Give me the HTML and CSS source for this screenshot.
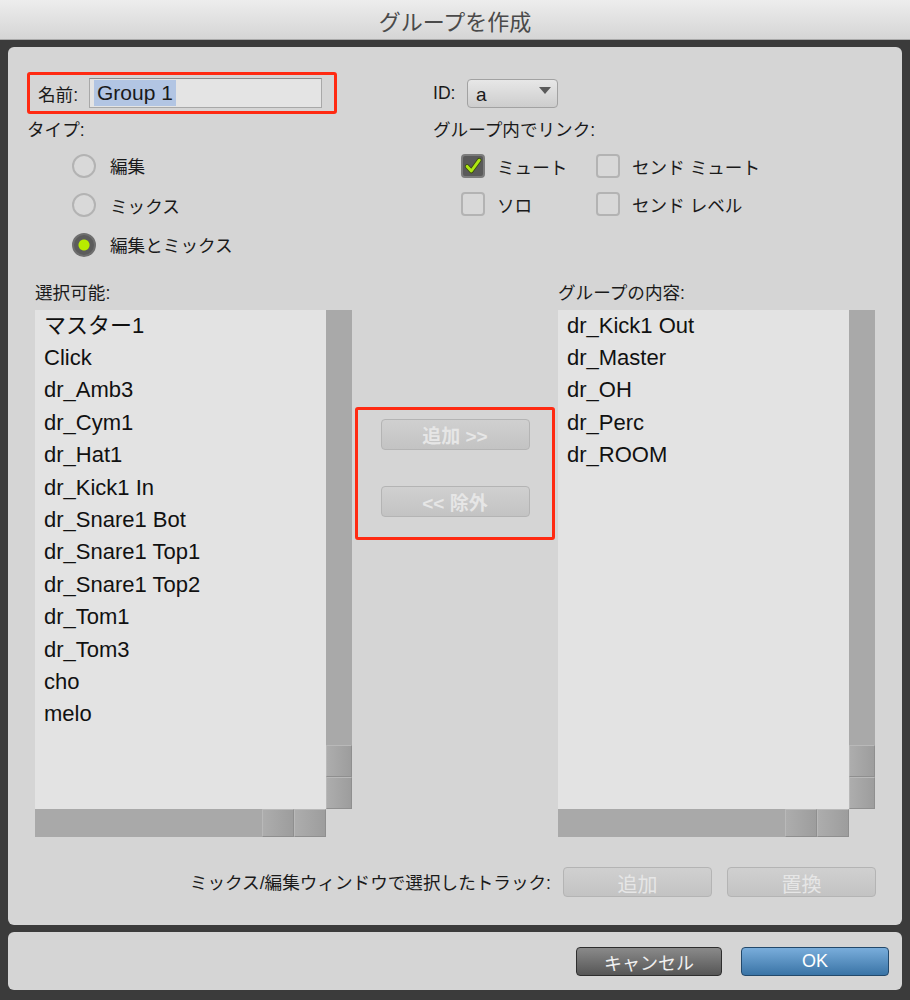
FILE: index.html
```html
<!DOCTYPE html>
<html lang="ja">
<head>
  <meta charset="UTF-8" />
  <title>グループを作成</title>
  <link rel="stylesheet" href="styles.css">
</head>
<body>

  <!-- TITLE BAR -->
  <div class="titlebar">グループを作成</div>

  <div class="dialog">

    <!-- MAIN PANEL -->
    <div class="panel main">
      <div class="top">
        <div class="col-left">
          <div class="name-box">
            <label>名前:</label>
            <div class="text-field"><span class="sel">Group 1</span></div>
          </div>
          <div class="caption">タイプ:</div>
          <div class="radios">
            <div class="radio-row"><span class="radio"></span>編集</div>
            <div class="radio-row"><span class="radio"></span>ミックス</div>
            <div class="radio-row"><span class="radio on"></span>編集とミックス</div>
          </div>
        </div>
        <div class="col-right">
          <div class="id-row">
            <label>ID:</label>
            <div class="popup">a<span class="arrow"></span></div>
          </div>
          <div class="caption">グループ内でリンク:</div>
          <div class="checks">
            <div class="check-row">
              <span class="check on">
                <svg viewBox="0 0 24 24" width="22" height="22"><path d="M5 12.5 L10 18 L19.5 5" fill="none" stroke="#3b4a10" stroke-width="5.5" stroke-linecap="round" stroke-linejoin="round"/><path d="M5 12.5 L10 18 L19.5 5" fill="none" stroke="#aee813" stroke-width="3.5" stroke-linecap="round" stroke-linejoin="round"/></svg>
              </span>ミュート
            </div>
            <div class="check-row"><span class="check"></span>センド ミュート</div>
            <div class="check-row"><span class="check"></span>ソロ</div>
            <div class="check-row"><span class="check"></span>センド レベル</div>
          </div>
        </div>
      </div>

      <!-- TRACK LISTS -->
      <div class="lists">
        <div class="caption">選択可能:</div>
        <div></div>
        <div class="caption">グループの内容:</div>

        <div class="listbox">
          <ul class="items">
            <li>マスター1</li>
            <li>Click</li>
            <li>dr_Amb3</li>
            <li>dr_Cym1</li>
            <li>dr_Hat1</li>
            <li>dr_Kick1 In</li>
            <li>dr_Snare1 Bot</li>
            <li>dr_Snare1 Top1</li>
            <li>dr_Snare1 Top2</li>
            <li>dr_Tom1</li>
            <li>dr_Tom3</li>
            <li>cho</li>
            <li>melo</li>
          </ul>
          <div class="vscroll"><div class="track"></div><div class="sbtn"></div><div class="sbtn"></div></div>
          <div class="hscroll"><div class="track"></div><div class="sbtn"></div><div class="sbtn"></div></div>
        </div>

        <div class="mid">
          <div class="move-box">
            <button class="btn off">追加 &gt;&gt;</button>
            <button class="btn off">&lt;&lt; 除外</button>
          </div>
        </div>

        <div class="listbox">
          <ul class="items">
            <li>dr_Kick1 Out</li>
            <li>dr_Master</li>
            <li>dr_OH</li>
            <li>dr_Perc</li>
            <li>dr_ROOM</li>
          </ul>
          <div class="vscroll"><div class="track"></div><div class="sbtn"></div><div class="sbtn"></div></div>
          <div class="hscroll"><div class="track"></div><div class="sbtn"></div><div class="sbtn"></div></div>
        </div>
      </div>

      <div class="track-row">
        <span>ミックス/編集ウィンドウで選択したトラック:</span>
        <button class="btn off wide">追加</button>
        <button class="btn off wide">置換</button>
      </div>
    </div>

    <!-- FOOTER -->
    <div class="panel footer">
      <button class="btn cancel">キャンセル</button>
      <button class="btn ok">OK</button>
    </div>

  </div>

</body>
</html>
```

FILE: styles.css
```css
body {
  margin: 0;
  background: #3b3b3b;
  font-family: "Liberation Sans", "Noto Sans CJK JP", sans-serif;
  color: #1a1a1a;
  font-size: 17.6px;
}
.titlebar {
  height: 40px;
  line-height: 40px;
  text-align: center;
  font-family: "Noto Sans CJK JP", sans-serif;
  font-size: 22px;
  color: #4a4a4a;
  background: linear-gradient(#ededed, #d5d5d5);
  border-bottom: 1px solid #a9a9a9;
  box-sizing: border-box;
}
.dialog {
  padding: 7px 8px 0;
}
.panel {
  background: #d5d5d5;
  border-radius: 6px;
  box-sizing: border-box;
}
.main {
  height: 878px;
  padding: 25px 26px 0 19px;
}
.caption {
  line-height: 20px;
}

/* top area */
.top {
  display: flex;
}
.col-left {
  width: 406px;
}
.name-box {
  width: 310px;
  height: 42px;
  box-sizing: border-box;
  border: 3px solid #ff2a12;
  border-radius: 3px;
  display: flex;
  align-items: center;
  padding-left: 8px;
}
.name-box label {
  width: 51px;
}
.text-field {
  width: 233px;
  height: 30px;
  box-sizing: border-box;
  background: #e4e4e4;
  border: 1px solid #a8a8a8;
  border-top-color: #8c8c8c;
  display: flex;
  align-items: center;
  padding-left: 4px;
  font-size: 21px;
}
.sel {
  background: #b2c5e3;
  padding: 0 3px;
  line-height: 26px;
}
.top .caption {
  margin-top: 6px;
}
.radios {
  margin-left: 45px;
  padding-top: 6px;
}
.radio-row {
  height: 39.5px;
  display: flex;
  align-items: center;
}
.radio {
  width: 24px;
  height: 24px;
  box-sizing: border-box;
  border-radius: 50%;
  border: 2px solid #b3b3b3;
  background: #d9d9d9;
  margin-right: 14px;
}
.radio.on {
  border: 2px solid #6f6f6f;
  background: radial-gradient(circle, #b8ec00 0 5px, #5c5c5c 6px);
}
.id-row {
  height: 42px;
  display: flex;
  align-items: center;
}
.id-row label {
  width: 34px;
}
.popup {
  position: relative;
  width: 91px;
  height: 29px;
  box-sizing: border-box;
  border: 1px solid #a2a2a2;
  border-radius: 4px;
  background: linear-gradient(#e7e7e7, #cdcdcd);
  padding-left: 8px;
  line-height: 30px;
  font-size: 19px;
}
.arrow {
  position: absolute;
  right: 6px;
  top: 7px;
  border-left: 6px solid transparent;
  border-right: 6px solid transparent;
  border-top: 7px solid #5a5a5a;
}
.checks {
  margin-left: 28px;
  padding-top: 7px;
  display: grid;
  grid-template-columns: 135px auto;
}
.check-row {
  height: 38px;
  display: flex;
  align-items: center;
}
.check {
  width: 24px;
  height: 24px;
  box-sizing: border-box;
  border: 2px solid #b3b3b3;
  border-radius: 4px;
  background: #d8d8d8;
  margin-right: 12px;
  display: flex;
  align-items: center;
  justify-content: center;
}
.check.on {
  background: #5a5a5a;
  border-color: #7c7c7c;
}

/* lists */
.lists {
  margin-top: 18px;
  margin-left: 8px;
  display: grid;
  grid-template-columns: 317px 206px 317px;
  row-gap: 7px;
}
.listbox {
  display: grid;
  grid-template-columns: 291px 26px;
  grid-template-rows: 499px 28px;
}
.items {
  list-style: none;
  margin: 0;
  padding: 0 0 0 9px;
  background: #e3e3e3;
  font-size: 22px;
  line-height: 32.4px;
  color: #111;
}
.vscroll {
  display: flex;
  flex-direction: column;
}
.hscroll {
  display: flex;
}
.track {
  flex: 1;
  background: #a9a9a9;
}
.sbtn {
  background: linear-gradient(90deg, #adadad, #9d9d9d);
  border: 1px solid #b9b9b9;
  border-right-color: #8f8f8f;
  border-bottom-color: #8f8f8f;
}
.vscroll .sbtn {
  height: 32px;
  box-sizing: border-box;
}
.hscroll .sbtn {
  width: 32px;
  box-sizing: border-box;
}
.mid {
  padding: 97px 3px 0;
}
.move-box {
  height: 133px;
  box-sizing: border-box;
  border: 3px solid #ff2a12;
  border-radius: 3px;
  display: flex;
  flex-direction: column;
  align-items: center;
  padding-top: 9px;
  gap: 36px;
}
.btn {
  font-family: "Liberation Sans", "Noto Sans CJK JP", sans-serif;
  font-size: 18px;
  border-radius: 4px;
  cursor: pointer;
}
.btn.off {
  width: 149px;
  height: 31px;
  background: linear-gradient(#d0d0d0, #c3c3c3);
  border: 1px solid #b4b4b4;
  color: #e6e6e6;
  font-size: 19px;
  font-weight: 600;
}
.track-row {
  margin-top: 30px;
  display: flex;
  justify-content: flex-end;
  align-items: center;
  gap: 15px;
}
.track-row span {
  margin-right: -3px;
}
.btn.wide {
  height: 30px;
  width: 149px;
  font-size: 20px;
  font-weight: 400;
}

/* footer */
.footer {
  margin-top: 7px;
  height: 58px;
  display: flex;
  justify-content: flex-end;
  align-items: center;
  gap: 19px;
  padding-right: 13px;
}
.cancel {
  width: 146px;
  height: 29px;
  background: linear-gradient(#8a8a8a, #565656);
  border: 1px solid #2e2e2e;
  color: #f0f0f0;
}
.ok {
  width: 148px;
  height: 29px;
  background: linear-gradient(#79addb, #3a74a6);
  border: 1px solid #23496b;
  color: #fff;
}
```
